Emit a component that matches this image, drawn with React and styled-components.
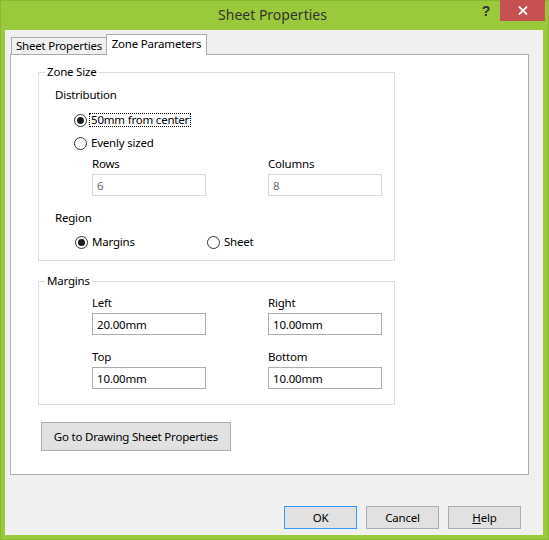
import React from 'react';
import styled, { createGlobalStyle } from 'styled-components';

const GlobalStyle = createGlobalStyle`
	html, body {
		margin: 0;
		padding: 0;
		background: #ffffff;
	}
	body {
		font-family: "Noto Sans", "Open Sans", sans-serif;
		font-size: 11.5px;
		letter-spacing: -0.2px;
		color: #000000;
	}
	* {
		box-sizing: border-box;
	}
`;

const Window = styled.div`
	width: 549px;
	height: 540px;
	background: #9aca3c;
	box-shadow: inset 0 0 0 1px #89b732;
	display: flex;
	flex-direction: column;
`;

const TitleBar = styled.div`
	height: 30px;
	display: grid;
	grid-template-columns: 1fr auto 1fr;
	padding-right: 4px;
`;

const Title = styled.div`
	grid-column: 2;
	font-size: 14px;
	letter-spacing: 0;
	line-height: 29px;
	color: #333333;
`;

const Controls = styled.div`
	grid-column: 3;
	justify-self: end;
	display: flex;
	align-items: flex-start;
`;

const HelpGlyph = styled.div`
	width: 28px;
	height: 21px;
	display: flex;
	align-items: center;
	justify-content: center;
	font-family: "Liberation Sans", sans-serif;
	font-weight: bold;
	font-size: 14px;
	color: #333333;
`;

const CloseButton = styled.div`
	width: 45px;
	height: 21px;
	background: #c75050;
	display: flex;
	align-items: center;
	justify-content: center;
`;

const Client = styled.div`
	flex: 1;
	margin: 0 6px 5px 5px;
	background: #f0f0f0;
	padding: 4px 0 0 5px;
	display: flex;
	flex-direction: column;
`;

const TabStrip = styled.div`
	display: flex;
	align-items: flex-end;
	padding-left: 1px;
	height: 21px;
	margin-bottom: -1px;
	position: relative;
	z-index: 1;
`;

const Tab = styled.div`
	width: ${p => (p.$active ? '101px' : '96px')};
	height: ${p => (p.$active ? '21px' : '18px')};
	margin-left: ${p => (p.$active ? '-1px' : '0')};
	border: 1px solid #acacac;
	border-bottom: ${p => (p.$active ? 'none' : '1px solid #acacac')};
	background: ${p => (p.$active ? '#ffffff' : '#f0f0f0')};
	display: flex;
	align-items: ${p => (p.$active ? 'flex-start' : 'center')};
	padding-top: ${p => (p.$active ? '1px' : '0')};
	justify-content: center;
	line-height: 16px;
	white-space: nowrap;
`;

const Panel = styled.div`
	width: 519px;
	height: 421px;
	border: 1px solid #acacac;
	background: #ffffff;
	padding: 9px 0 0 27px;
`;

const Group = styled.fieldset`
	margin: 0;
	padding: 0;
	width: 357px;
	border: 1px solid #dcdcdc;
	min-inline-size: 0;

	& + & {
		margin-top: 12px;
	}
`;

const Legend = styled.legend`
	padding: 0 2px;
	margin-left: 6px;
	line-height: 16px;
`;

const GroupBody = styled.div`
	padding: ${p => p.$pad};
`;

const Caption = styled.div`
	line-height: 16px;
	margin-top: ${p => p.$top || 0}px;
`;

const RadioRow = styled.div`
	display: flex;
	align-items: center;
	height: 16px;
	margin-top: ${p => p.$top || 0}px;
	margin-left: ${p => p.$indent || 19}px;
`;

const RadioOption = styled.label`
	display: flex;
	align-items: center;
	width: ${p => (p.$width ? `${p.$width}px` : 'auto')};
`;

const RadioCircle = styled.span`
	width: 13px;
	height: 13px;
	border-radius: 50%;
	border: 1px solid #333333;
	background: #ffffff;
	display: inline-flex;
	align-items: center;
	justify-content: center;
	flex-shrink: 0;

	&::after {
		content: '';
		width: 7px;
		height: 7px;
		border-radius: 50%;
		background: ${p => (p.$checked ? '#1b1b1b' : 'transparent')};
	}
`;

const RadioText = styled.span`
	line-height: 12px;
	margin-left: ${p => (p.$focused ? '2px' : '4px')};
	padding: ${p => (p.$focused ? '0 1px' : '0')};
	border: ${p => (p.$focused ? '1px dotted #000000' : 'none')};
	white-space: nowrap;
`;

const FieldGrid = styled.div`
	display: grid;
	grid-template-columns: 114px 114px;
	column-gap: 62px;
	row-gap: 14px;
	margin-top: ${p => p.$top || 0}px;
	margin-left: ${p => p.$left || 0}px;
`;

const Field = styled.div`
	display: flex;
	flex-direction: column;
	gap: 2px;
`;

const FieldLabel = styled.span`
	line-height: 16px;
`;

const Input = styled.input`
	width: 114px;
	height: 22px;
	margin: 0;
	padding: 0 4px;
	border: 1px solid ${p => (p.disabled ? '#d9d9d9' : '#abadb3')};
	background: #ffffff;
	font-family: inherit;
	font-size: 11.5px;
	letter-spacing: -0.2px;
	color: ${p => (p.disabled ? '#6d6d6d' : '#000000')};
	outline: none;
`;

const Button = styled.button`
	width: ${p => p.$width}px;
	height: ${p => p.$height}px;
	margin: 0;
	padding: 0;
	border: 1px solid ${p => (p.$default ? '#3399ff' : '#adadad')};
	background: #e1e1e1;
	font-family: inherit;
	font-size: 11.5px;
	letter-spacing: -0.2px;
	color: #000000;
`;

const LinkButton = styled(Button)`
	margin: 17px 0 0 3px;
`;

const Footer = styled.div`
	display: flex;
	justify-content: flex-end;
	gap: 9px;
	margin-top: 31px;
	padding-right: 22px;
`;

const Radio = ({ checked, focused, width, children }) => (
	<RadioOption $width={width}>
		<RadioCircle $checked={checked} />
		<RadioText $focused={focused}>{children}</RadioText>
	</RadioOption>
);

const App = () => {
	return (
		<>
			<GlobalStyle />
			<Window>
				<TitleBar>
					<Title>Sheet Properties</Title>
					<Controls>
						<HelpGlyph>?</HelpGlyph>
						<CloseButton>
							<svg width='10' height='9' viewBox='0 0 10 9'>
								<path d='M1 0.5 L9 8.5 M9 0.5 L1 8.5' stroke='#ffffff' strokeWidth='1.8' />
							</svg>
						</CloseButton>
					</Controls>
				</TitleBar>
				<Client>
					<TabStrip>
						<Tab>Sheet Properties</Tab>
						<Tab $active>Zone Parameters</Tab>
					</TabStrip>
					<Panel>
						<Group>
							<Legend>Zone Size</Legend>
							<GroupBody $pad='7px 0 10px 16px'>
								<Caption>Distribution</Caption>
								<RadioRow $top={9}>
									<Radio checked focused>50mm from center</Radio>
								</RadioRow>
								<RadioRow $top={7}>
									<Radio>Evenly sized</Radio>
								</RadioRow>
								<FieldGrid $top={5} $left={37}>
									<Field>
										<FieldLabel>Rows</FieldLabel>
										<Input disabled defaultValue='6' />
									</Field>
									<Field>
										<FieldLabel>Columns</FieldLabel>
										<Input disabled defaultValue='8' />
									</Field>
								</FieldGrid>
								<Caption $top={14}>Region</Caption>
								<RadioRow $top={8} $indent={20}>
									<Radio checked width={132}>Margins</Radio>
									<Radio>Sheet</Radio>
								</RadioRow>
							</GroupBody>
						</Group>
						<Group>
							<Legend>Margins</Legend>
							<GroupBody $pad='6px 0 15px 53px'>
								<FieldGrid>
									<Field>
										<FieldLabel>Left</FieldLabel>
										<Input defaultValue='20.00mm' />
									</Field>
									<Field>
										<FieldLabel>Right</FieldLabel>
										<Input defaultValue='10.00mm' />
									</Field>
									<Field>
										<FieldLabel>Top</FieldLabel>
										<Input defaultValue='10.00mm' />
									</Field>
									<Field>
										<FieldLabel>Bottom</FieldLabel>
										<Input defaultValue='10.00mm' />
									</Field>
								</FieldGrid>
							</GroupBody>
						</Group>
						<LinkButton $width={190} $height={29}>Go to Drawing Sheet Properties</LinkButton>
					</Panel>
					<Footer>
						<Button $width={73} $height={23} $default>OK</Button>
						<Button $width={73} $height={23}>Cancel</Button>
						<Button $width={73} $height={23}>
							<u>H</u>elp
						</Button>
					</Footer>
				</Client>
			</Window>
		</>
	);
};

export default App;
